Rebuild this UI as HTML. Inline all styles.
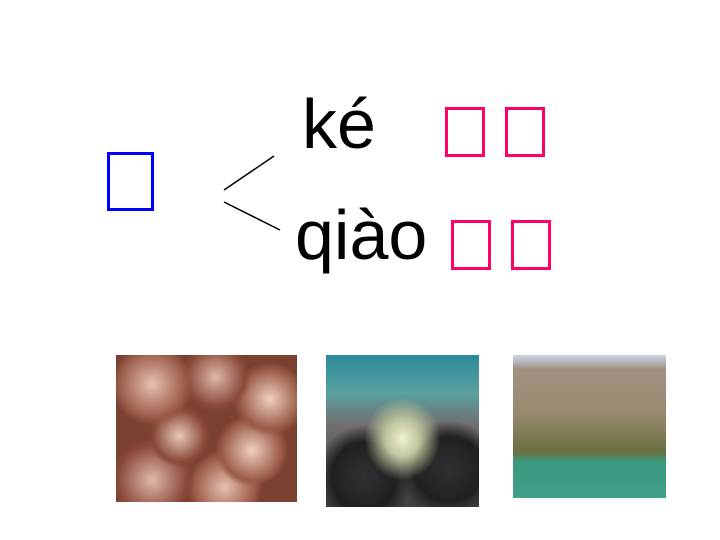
<!DOCTYPE html>
<html><head><style>
body{margin:0;width:720px;height:540px;background:#fff;position:relative;overflow:hidden;font-family:"Liberation Sans",sans-serif}
.b{position:absolute;box-sizing:border-box;border:3px solid #ff0066}
.t{position:absolute;font-size:70px;line-height:1;color:#000}
.img{position:absolute}
</style></head><body>
<div class="b" style="left:107px;top:152px;width:47px;height:59px;border-color:#0000ff"></div>
<svg style="position:absolute;left:0;top:0" width="720" height="540">
<line x1="224" y1="190" x2="274" y2="156" stroke="#000" stroke-width="1.5"/>
<line x1="224" y1="202" x2="280" y2="230" stroke="#000" stroke-width="1.5"/>
</svg>
<div class="t" style="left:302px;top:89px">ké</div>
<div class="t" style="left:295px;top:200px">qiào</div>
<div class="b" style="left:445px;top:107px;width:40px;height:50px"></div>
<div class="b" style="left:505px;top:107px;width:40px;height:50px"></div>
<div class="b" style="left:451px;top:220px;width:40px;height:50px"></div>
<div class="b" style="left:511px;top:220px;width:40px;height:50px"></div>
<div class="img" style="left:116px;top:355px;width:181px;height:147px;background:
radial-gradient(circle at 20% 20%,#e8c0b0 0,#9a5a48 18%,transparent 22%),
radial-gradient(circle at 55% 15%,#e0b8a8 0,#8a4a3a 18%,transparent 22%),
radial-gradient(circle at 85% 30%,#f0d0c0 0,#9a5a48 16%,transparent 20%),
radial-gradient(circle at 35% 55%,#e8c8b8 0,#8a4a3a 18%,transparent 22%),
radial-gradient(circle at 75% 65%,#f0d0c0 0,#9a5a48 18%,transparent 22%),
radial-gradient(circle at 20% 85%,#e0b8a8 0,#8a4a3a 18%,transparent 22%),
radial-gradient(circle at 60% 90%,#e8c0b0 0,#9a5a48 18%,transparent 22%),
#7a4030"></div>
<div class="img" style="left:326px;top:355px;width:153px;height:152px;background:
radial-gradient(ellipse at 50% 55%,#f0f0d0 0,#c0c8a0 15%,transparent 35%),
radial-gradient(ellipse at 25% 80%,#303030 0,#202020 20%,transparent 30%),
radial-gradient(ellipse at 80% 75%,#303030 0,#202020 20%,transparent 30%),
linear-gradient(#2a8a9a 0,#5aa0a0 25%,#707070 45%,#404040 100%)"></div>
<div class="img" style="left:513px;top:355px;width:153px;height:143px;background:
linear-gradient(#c8d8e8 0,#a09080 10%,#9a8a70 40%,#6a7040 68%,#3a9a80 75%,#40a088 100%)"></div>
</body></html>
